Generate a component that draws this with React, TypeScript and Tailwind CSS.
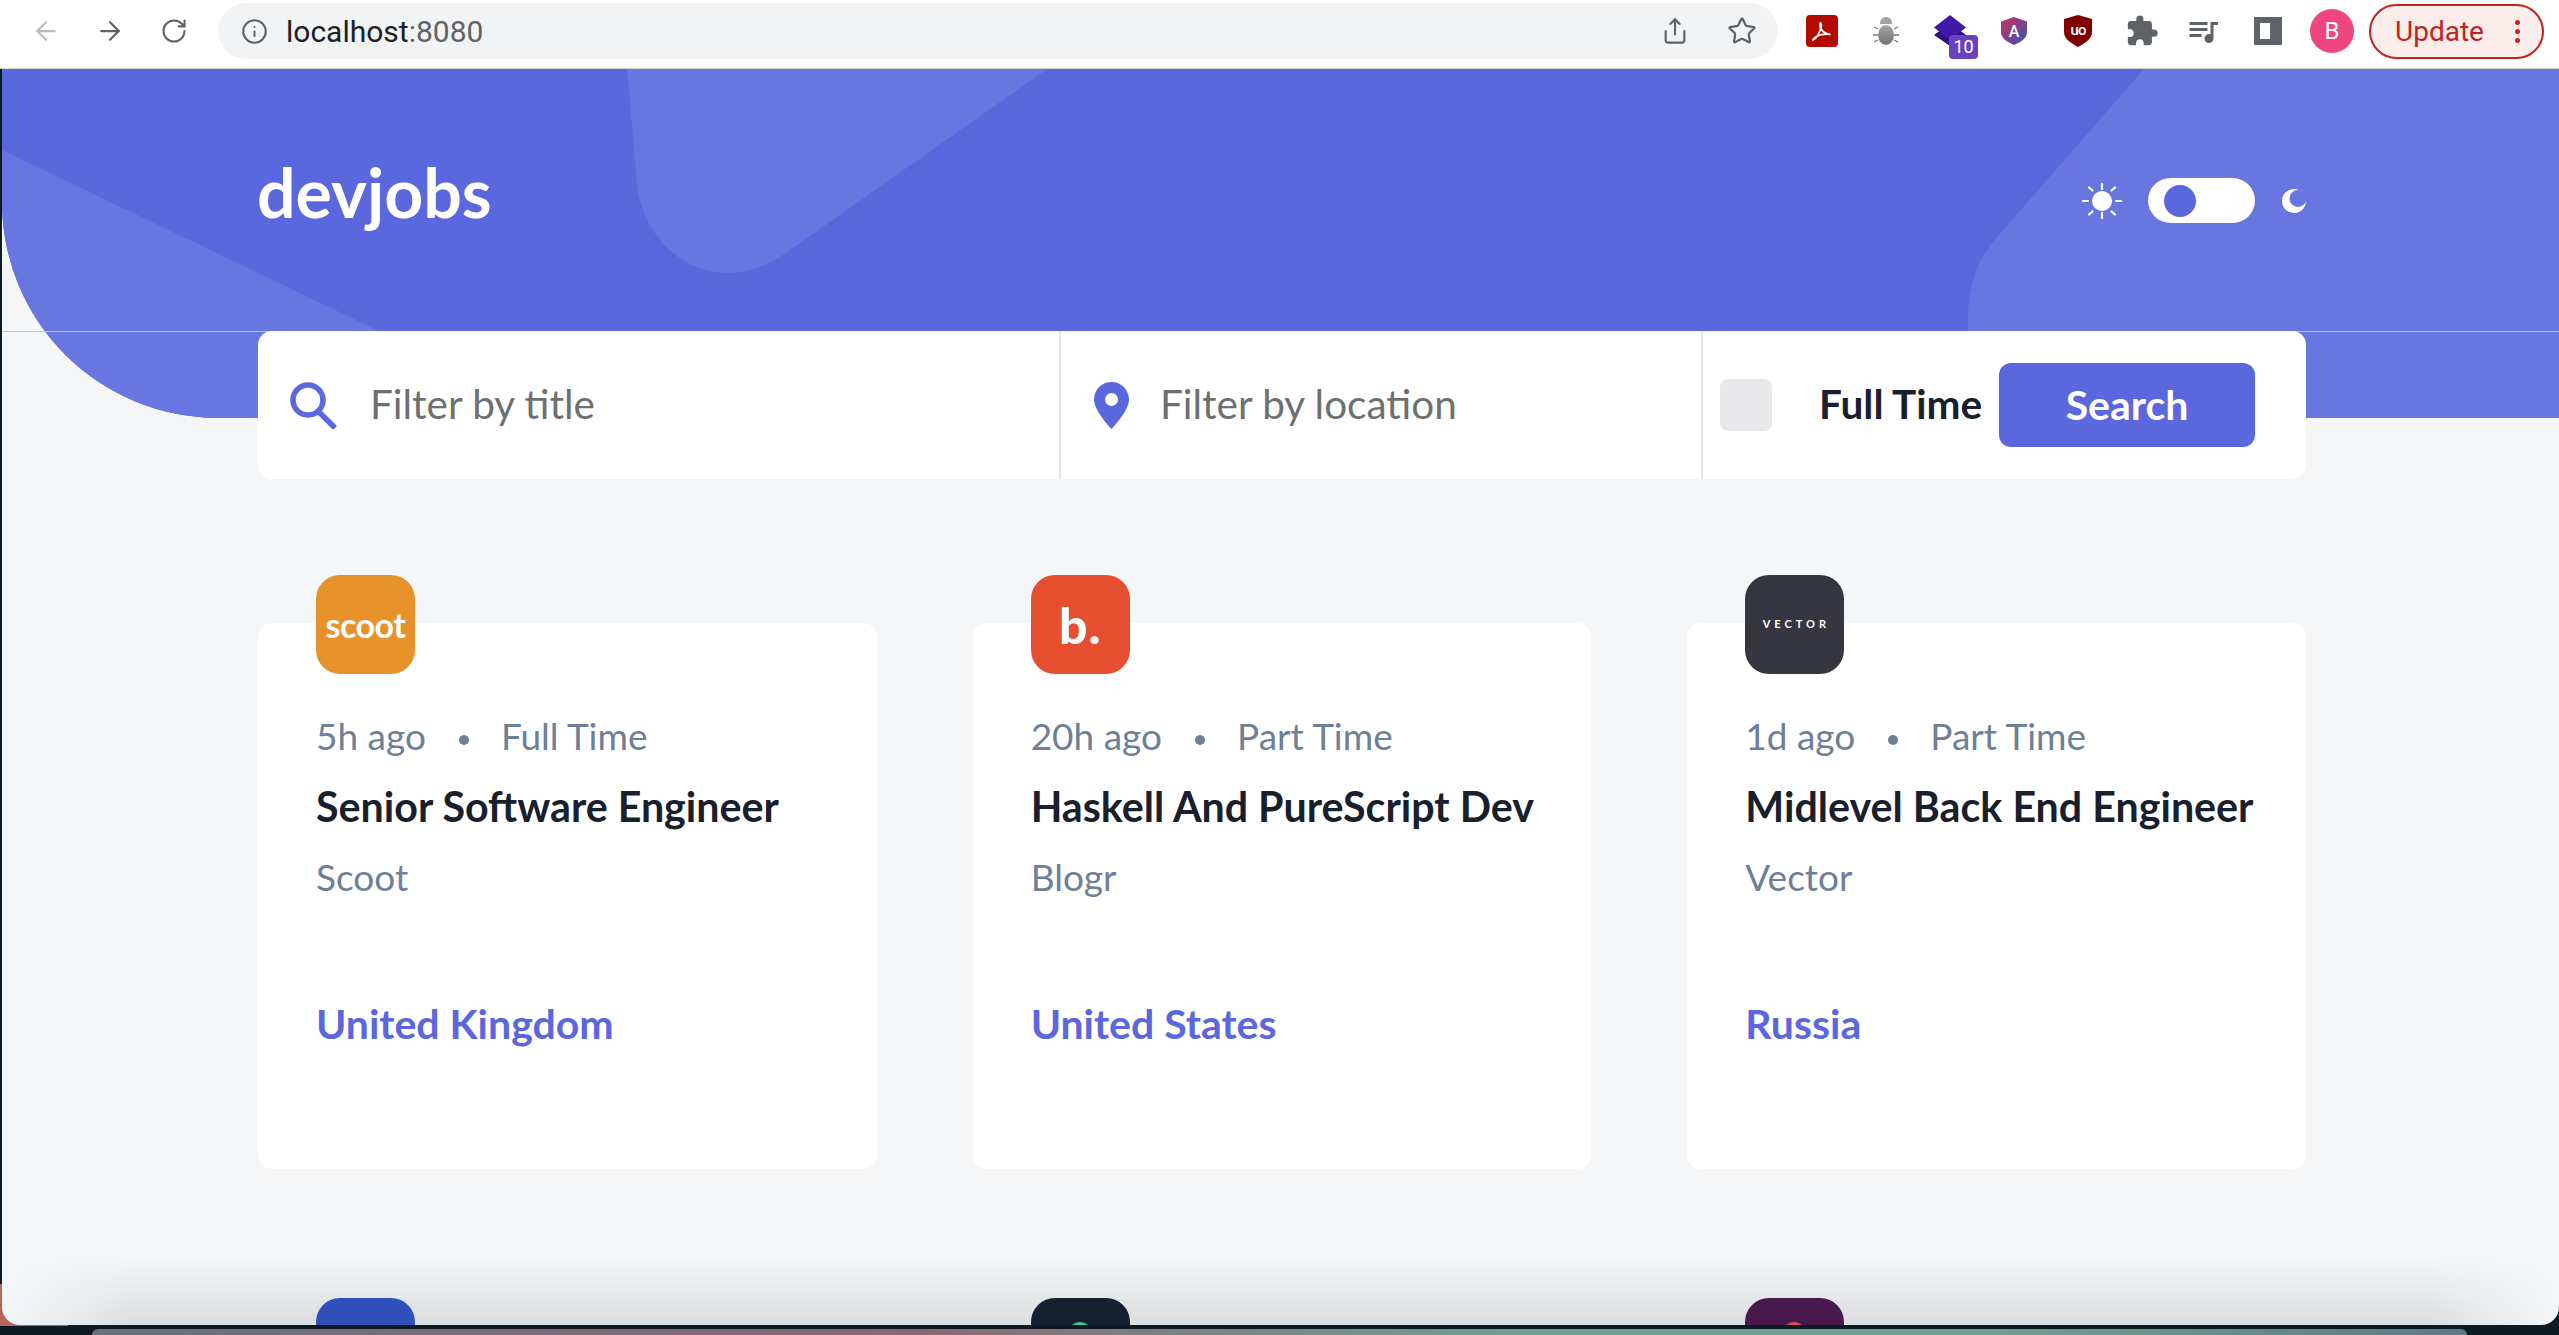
import { ArrowLeft, ArrowRight, RotateCw, Info, Share, Star } from "lucide-react";
import { MdExtension, MdQueueMusic } from "react-icons/md";

interface Job {
  posted: string;
  contract: string;
  title: string;
  company: string;
  location: string;
  logoClass: string;
  logo: React.ReactNode;
}

const jobs: Job[] = [
  {
    posted: "5h ago",
    contract: "Full Time",
    title: "Senior Software Engineer",
    company: "Scoot",
    location: "United Kingdom",
    logoClass: "bg-[#e8922c]",
    logo: <span className="text-[34px] font-bold tracking-[-0.5px] text-white">scoot</span>,
  },
  {
    posted: "20h ago",
    contract: "Part Time",
    title: "Haskell And PureScript Dev",
    company: "Blogr",
    location: "United States",
    logoClass: "bg-[#e54f2f]",
    logo: <span className="text-[50px] font-black leading-none tracking-[1px] text-white">b.</span>,
  },
  {
    posted: "1d ago",
    contract: "Part Time",
    title: "Midlevel Back End Engineer",
    company: "Vector",
    location: "Russia",
    logoClass: "bg-[#363640]",
    logo: <span className="pl-[3px] text-[11px] font-bold tracking-[4px] text-white">VECTOR</span>,
  },
];

function AcrobatIcon() {
  return (
    <svg viewBox="0 0 32 32" className="h-[32px] w-[32px]">
      <rect width="32" height="32" rx="4" fill="#b30b00" />
      <path
        d="M7 25c3-1 6-6 8-12 .5-2 .5-5-.5-5s-1 3 0 5c2 4 5 6 10 6.500-4-1-11 0-14 2-2 1.500-4 3-3.500 3.500z"
        fill="none"
        stroke="#fff"
        strokeWidth="1.800"
      />
    </svg>
  );
}

function BugIcon() {
  return (
    <svg viewBox="0 0 28 30" className="h-[30px] w-[28px]">
      <defs>
        <linearGradient id="bugFill" x1="0" y1="0" x2="0" y2="1">
          <stop offset="0" stopColor="#a6a6a6" />
          <stop offset="1" stopColor="#727272" />
        </linearGradient>
      </defs>
      <ellipse cx="14" cy="19" rx="8" ry="10" fill="url(#bugFill)" />
      <path d="M8 7a6 6 0 0 1 12 0v1H8z" fill="#a2a2a2" />
      <path d="M6 13 2 11M6 19H1M6 24l-4 2M22 13l4-2M22 19h5M22 24l4 2" stroke="#777" strokeWidth="1.300" />
    </svg>
  );
}

function StackIcon() {
  return (
    <div className="relative h-[44px] w-[44px]">
      <svg viewBox="0 0 32 32" className="h-[32px] w-[32px]">
        <path d="M0 20 16 8 32 20 16 31z" fill="#2b1087" />
        <path d="M16 0 32 12.500 16 25 0 12.500z" fill="#4217a8" />
      </svg>
      <span className="absolute left-[15px] top-[20px] flex h-[24px] w-[29px] items-center justify-center rounded-[4px] bg-[#6a3fc0] text-[18px] leading-none text-white">
        10
      </span>
    </div>
  );
}

function AngularShield() {
  return (
    <svg viewBox="0 0 26 28" className="h-[28px] w-[26px]">
      <defs>
        <linearGradient id="shieldFill" x1="0" y1="0" x2="1" y2="1">
          <stop offset="0" stopColor="#d12f5d" />
          <stop offset="1" stopColor="#2f55b8" />
        </linearGradient>
      </defs>
      <path d="M13 0 26 4.500V15c0 6-6 10-13 13C6 25 0 21 0 15V4.500z" fill="url(#shieldFill)" />
      <text x="13" y="20" textAnchor="middle" fontSize="16" fontWeight="500" fill="#fff" fontFamily="Roboto, sans-serif">
        A
      </text>
    </svg>
  );
}

function UBlockShield() {
  return (
    <svg viewBox="0 0 28 32" className="h-[32px] w-[28px]">
      <path d="M14 0 28 4v13c0 7-7 11-14 15C7 28 0 24 0 17V4z" fill="#800000" />
      <text
        x="14"
        y="20"
        textAnchor="middle"
        fontSize="15"
        fontWeight="500"
        letterSpacing="-1"
        fill="#fff"
        fontFamily="Roboto, sans-serif"
      >
        uo
      </text>
    </svg>
  );
}

function BrowserBar() {
  return (
    <div className="relative z-20 flex h-[69px] shrink-0 items-center border-b border-[#d2d3d5] bg-white pb-[6px] font-['Roboto',sans-serif]">
      <div className="flex w-[218px] items-center pl-[31px]">
        <ArrowLeft size={30} strokeWidth={1.8} className="text-[#bcbcbc]" />
        <ArrowRight size={30} strokeWidth={1.8} className="ml-[34px] text-[#5f6368]" />
        <RotateCw size={28} strokeWidth={1.8} className="ml-[35px] text-[#5f6368]" />
      </div>
      <div className="flex h-[56px] w-[1560px] items-center rounded-full bg-[#f1f3f4] pl-[23px]">
        <Info size={27} strokeWidth={1.8} className="text-[#5f6368]" />
        <span className="ml-[18px] text-[30px] text-[#202124]">
          localhost<span className="text-[#5f6368]">:8080</span>
        </span>
        <Share size={28} strokeWidth={1.8} className="ml-auto text-[#5f6368]" />
        <Star size={30} strokeWidth={1.8} className="ml-[38px] mr-[21px] text-[#5f6368]" />
      </div>
      <div className="flex flex-1 items-center">
        <div className="ml-[28px]">
          <AcrobatIcon />
        </div>
        <div className="ml-[34px]">
          <BugIcon />
        </div>
        <div className="ml-[34px] mt-[12px]">
          <StackIcon />
        </div>
        <div className="ml-[23px]">
          <AngularShield />
        </div>
        <div className="ml-[37px]">
          <UBlockShield />
        </div>
        <MdExtension size={34} className="ml-[33px] text-[#5f6368]" />
        <MdQueueMusic size={36} className="ml-[26px] text-[#5f6368]" />
        <div className="ml-[33px] h-[28px] w-[28px] border-[6px] border-[#5f6368] border-r-[12px]" />
        <div className="ml-[28px] flex h-[44px] w-[44px] items-center justify-center rounded-full bg-[#ef4581] text-[24px] text-white">
          B
        </div>
        <div className="ml-[15px] flex h-[55px] w-[175px] items-center rounded-full border-2 border-[#c5221f] bg-[#faedeb] pl-[24px] text-[28px] text-[#c5221f]">
          <span className="mt-[2px]">Update</span>
          <span className="ml-[31px] flex flex-col gap-[4px]">
            <span className="h-[5px] w-[5px] rounded-full bg-[#c5221f]" />
            <span className="h-[5px] w-[5px] rounded-full bg-[#c5221f]" />
            <span className="h-[5px] w-[5px] rounded-full bg-[#c5221f]" />
          </span>
        </div>
      </div>
    </div>
  );
}

function HeaderShapes() {
  // drawn in header coordinates, the page starts 69px down and 2px in
  return (
    <div className="absolute inset-0 overflow-hidden rounded-bl-[216px]">
      <svg viewBox="0 0 2557 349" className="h-full w-full">
        <path d="M0 81 L558 349 L0 349z" fill="#6a76e0" />
        <path
          d="M625 0 L635 114 C640 166 680 204 725 204 C745 204 762 198 778 188 L1045 0z"
          fill="#6a76e0"
        />
        <path
          d="M2142 0 L1990 174 C1972 196 1966 224 1966 250 C1966 280 1970 310 1980 349 L2557 349 L2557 0z"
          fill="#6a76e0"
        />
      </svg>
    </div>
  );
}

function SunIcon() {
  return (
    <svg viewBox="0 0 40 36" className="h-[36px] w-[40px]">
      <circle cx="20" cy="18" r="10" fill="#fff" />
      <path
        d="M20 1v5M20 30v5M1 18h5M34 18h5M7 4.500l3.500 3M33 4.500l-3.500 3M7 31.500l3.500-3M33 31.500l-3.500-3"
        stroke="#fff"
        strokeWidth="2.200"
        strokeLinecap="round"
      />
    </svg>
  );
}

function MoonIcon() {
  return (
    <svg viewBox="0 0 24 24" className="h-[24px] w-[24px]">
      <circle cx="12" cy="12" r="12" fill="#fff" />
      <circle cx="16" cy="9.500" r="8.500" fill="#6a76e0" />
    </svg>
  );
}

function SearchIcon() {
  return (
    <svg viewBox="0 0 47 47" className="h-[47px] w-[47px]">
      <circle cx="18" cy="18" r="15" fill="none" stroke="#5a67dd" strokeWidth="5.500" />
      <path d="M29 30 45 46" stroke="#5a67dd" strokeWidth="5.500" />
    </svg>
  );
}

function PinIcon() {
  return (
    <svg viewBox="0 0 35 47" className="h-[47px] w-[35px]">
      <path
        d="M17.500 0C7.800 0 0 7.800 0 17.500 0 29 17.500 47 17.500 47S35 29 35 17.500C35 7.800 27.200 0 17.500 0zm0 24a6.500 6.500 0 1 1 0-13 6.500 6.500 0 0 1 0 13z"
        fill="#5a67dd"
        fillRule="evenodd"
      />
    </svg>
  );
}

function SearchBar() {
  return (
    <div className="relative z-10 flex h-[148px] rounded-[14px] bg-white">
      <div className="flex w-[803px] items-center border-r-2 border-[#e3e6ea] pl-[32px]">
        <SearchIcon />
        <span className="-mt-[2px] ml-[33px] text-[40.5px] text-[#6e7070]">Filter by title</span>
      </div>
      <div className="flex w-[642px] items-center border-r-2 border-[#e3e6ea] pl-[33px]">
        <PinIcon />
        <span className="-mt-[2px] ml-[31px] text-[40.5px] text-[#6e7070]">Filter by location</span>
      </div>
      <div className="flex flex-1 items-center pl-[17px]">
        <div className="h-[52px] w-[52px] rounded-[8px] bg-[#e8e8ea]" />
        <span className="-mt-[2px] ml-[47px] text-[40.5px] font-bold text-[#19202d]">Full Time</span>
        <button className="ml-auto mr-[51px] flex h-[84px] w-[256px] items-center justify-center rounded-[12px] bg-[#5a67dd] text-[41px] font-bold text-white">
          Search
        </button>
      </div>
    </div>
  );
}

function JobCard({ job }: { job: Job }) {
  return (
    <div className="flex h-[546px] flex-col rounded-[14px] bg-white px-[58px]">
      <div className={`-mt-[48px] flex h-[99px] w-[99px] items-center justify-center rounded-[24px] ${job.logoClass}`}>
        {job.logo}
      </div>
      <div className="mt-[38px] flex items-center text-[37px] leading-[48px] text-[#6e8098]">
        <span>{job.posted}</span>
        <span className="ml-[33px] mt-[8px] h-[10px] w-[10px] rounded-full bg-[#6e8098]" />
        <span className="ml-[32px]">{job.contract}</span>
      </div>
      <h3 className="mt-[22px] whitespace-nowrap text-[41.2px] font-bold leading-[48px] text-[#19202d]">{job.title}</h3>
      <p className="mt-[23px] text-[37px] leading-[48px] text-[#6e8098]">{job.company}</p>
      <p className="mt-[99px] text-[41px] font-bold leading-[48px] text-[#5a67e0]">{job.location}</p>
    </div>
  );
}

function PeekCard({ logoClass, dotClass }: { logoClass: string; dotClass?: string }) {
  return (
    <div className="h-[546px] rounded-[14px] bg-white px-[58px]">
      <div className={`relative -mt-[48px] h-[99px] w-[99px] overflow-hidden rounded-[24px] ${logoClass}`}>
        {dotClass && <span className={`absolute left-[37px] top-[24px] h-[24px] w-[24px] rounded-full ${dotClass}`} />}
      </div>
    </div>
  );
}

export default function App() {
  return (
    <div className="flex h-screen flex-col overflow-hidden bg-[#0b1a24] font-['Lato',sans-serif]">
      <BrowserBar />
      <div className="relative flex min-h-0 flex-1 pl-[2px]">
        {/* wallpaper colour showing round the window's bottom left corner */}
        <div className="absolute bottom-0 left-0 h-[42px] w-[68px] bg-[#b5655a]" />
        <div className="relative mb-[1px] min-w-0 flex-1 overflow-hidden rounded-b-[18px] bg-[linear-gradient(to_right,#f4f6f8,transparent_130px),linear-gradient(to_left,#f4f6f8,transparent_130px),linear-gradient(to_bottom,#f4f6f8_0,#f4f6f8_1186px,#dcdddf_1256px)]">
          <header className="relative h-[349px] rounded-bl-[216px] bg-[#5a67dd]">
            <HeaderShapes />
            <div className="relative ml-[256px] mr-[253px] flex h-[262px] items-start justify-between">
              <span className="-ml-[1px] mt-[89px] text-[68px] font-bold leading-none text-white">devjobs</span>
              <div className="mt-[109px] flex items-center">
                <SunIcon />
                <div className="ml-[26px] flex h-[45px] w-[107px] items-center rounded-full bg-white pl-[16px]">
                  <div className="h-[32px] w-[32px] rounded-full bg-[#5a67dd]" />
                </div>
                <div className="ml-[27px]">
                  <MoonIcon />
                </div>
              </div>
            </div>
            <div className="relative ml-[256px] mr-[253px]">
              <SearchBar />
            </div>
            <div className="absolute left-0 right-0 top-[262px] h-px bg-[#9dd6e8]" />
          </header>
          <main className="ml-[256px] mr-[253px] grid grid-cols-3 gap-x-[96px] gap-y-[177px] pt-[205px]">
            {jobs.map((job) => (
              <JobCard key={job.title} job={job} />
            ))}
            <PeekCard logoClass="bg-[#2f50bb]" />
            <PeekCard logoClass="bg-[#141f30]" dotClass="bg-[#3fc8a0]" />
            <PeekCard logoClass="bg-[#47194d]" dotClass="bg-[#e5484d]" />
          </main>
        </div>
      </div>
      <div className="ml-[92px] mr-[92px] mt-[3px] h-[6px] shrink-0 rounded-t-[8px] bg-[linear-gradient(to_right,#6f7080,#8a6a70_35%,#6fa08c_60%,#6fa08c_80%,#5e7a88)]" />
    </div>
  );
}
